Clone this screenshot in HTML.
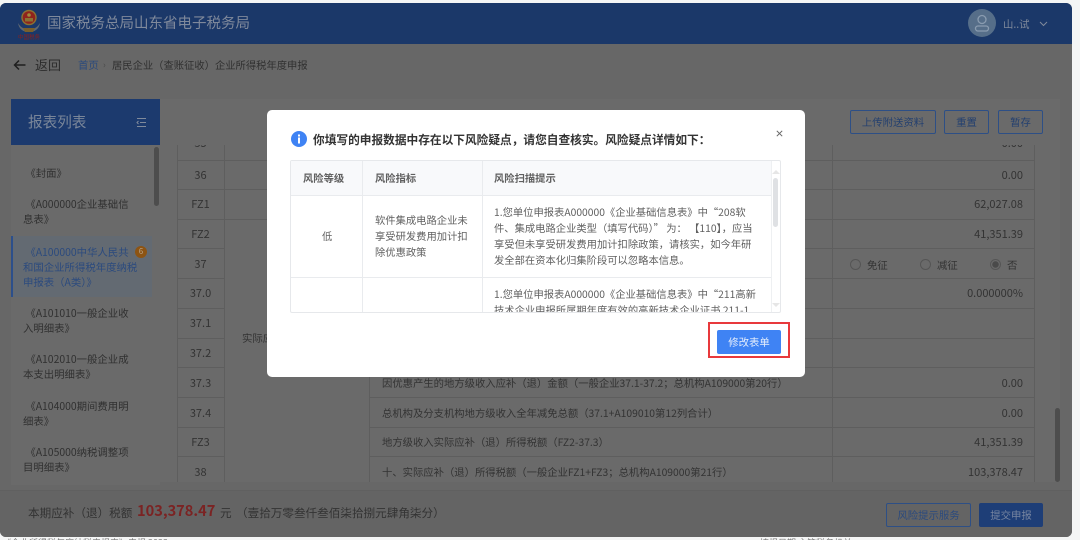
<!DOCTYPE html>
<html lang="zh"><head><meta charset="utf-8"><style>
html,body{margin:0;padding:0;width:1080px;height:540px;overflow:hidden;background:#f4f5f5}
*{box-sizing:border-box}
body{font-family:"Noto Sans CJK SC","Liberation Sans",sans-serif;color:#353535;font-size:10px;position:relative}
.a{position:absolute;white-space:nowrap}
#win{position:absolute;left:0;top:3px;width:1072px;height:534px;background:#676767;border-radius:6px;overflow:hidden;filter:blur(.35px)}
.rn{position:absolute;left:177px;width:47px;text-align:center;font-size:11px;color:#333}
.rv{position:absolute;left:832px;width:191px;text-align:right;font-size:11px;color:#333}
.rt{position:absolute;left:382px;font-size:10.34px;white-space:nowrap;color:#333}
.s{position:absolute;left:23px;width:125px;font-size:10.4px;line-height:14.7px;color:#303030;white-space:nowrap}
.btn{position:absolute;border:1px solid #2d4f86;border-radius:2px;color:#24406f;font-size:10.4px;text-align:center;height:24px;line-height:22px;top:107px}
.r{position:absolute;width:11px;height:11px;border:1px solid #555;border-radius:50%;top:256px}
.l{position:absolute;background:#5e5e5e}
#modal{position:absolute;left:267px;top:110px;width:538px;height:267px;background:#fff;border-radius:5px;filter:blur(.3px)}
.m{position:absolute;white-space:nowrap;font-size:10.3px;color:#606060;line-height:16px}
.th{font-weight:700;color:#606060}
.frag{position:absolute;top:538px;height:2px;overflow:hidden;font-size:9px;color:#777;line-height:12px;white-space:nowrap}
.frag span{display:block;margin-top:-1px}
</style></head><body>
<div class="frag" style="left:2px"><span>《企业所得税年度纳税申报表》申报 2023</span></div>
<div class="frag" style="left:760px"><span>填报日期 主管税务机关</span></div>
<div id="win">
 <div style="position:absolute;left:0;top:0;width:1072px;height:41px;background:#1b3869"></div>
 <svg style="position:absolute;left:16px;top:5px" width="26" height="35" viewBox="0 0 26 35">
  <path d="M2 15c1 6 5 9 11 9s10-3 11-9c-2 3-3 4-5 5H7c-2-1-3-2-5-5z" fill="#5f6872"/>
  <circle cx="13" cy="9.500" r="7" fill="#8f231c"/><circle cx="13" cy="9.500" r="7" fill="none" stroke="#8a7233" stroke-width="1.400"/>
  <rect x="9" y="10" width="8" height="3.500" fill="#8a7233"/><circle cx="13" cy="7" r="1.800" fill="#a08a3a"/>
  <path d="M7 20h12l-2 4H9z" fill="#7a5f2b"/>
  <text x="2" y="31" font-size="5.500" fill="#8f1f1a" font-family="Noto Sans CJK SC,sans-serif">中国税务</text>
 </svg>
 <div class="a" style="left:47px;top:10px;font-size:14.5px;line-height:20px;color:#7f899b">国家税务总局山东省电子税务局</div>
 <div style="position:absolute;left:968px;top:6px;width:28px;height:28px;border-radius:50%;background:#566e89"></div>
 <svg style="position:absolute;left:968px;top:6px" width="28" height="28" viewBox="0 0 28 28" fill="none" stroke="#8a9cb0" stroke-width="1.300"><circle cx="14" cy="10.500" r="4"/><rect x="7.500" y="17" width="13" height="5" rx="2.500"/></svg>
 <div class="a" style="left:1003px;top:14px;font-size:10.400px;line-height:14px;color:#808a9b">山..试</div>
 <svg style="position:absolute;left:1039px;top:18px" width="9" height="6" viewBox="0 0 9 6" fill="none" stroke="#808a9b" stroke-width="1"><path d="M1 1l3.500 3.500L8 1"/></svg>

 <svg style="position:absolute;left:13px;top:56px" width="13" height="12" viewBox="0 0 13 12" fill="none" stroke="#1f1f1f" stroke-width="1.500"><path d="M12.500 6H1.500M6 1.500L1.500 6 6 10.500"/></svg>
 <div class="a" style="left:35px;top:53px;font-size:13px;line-height:18px;color:#2c2c2c">返回</div>
 <div class="a" style="left:78px;top:55px;font-size:10.400px;line-height:14px;color:#2b4a7c">首页</div>
 <div class="a" style="left:103px;top:55px;font-size:9px;line-height:14px;color:#4a4a4a">›</div>
 <div class="a" style="left:112px;top:55px;font-size:10.300px;line-height:14px;color:#303030">居民企业（查账征收）企业所得税年度申报</div>

 <div style="position:absolute;left:160px;top:96px;width:900px;height:383px;background:#6a6a6a"></div>
 <div style="position:absolute;left:11px;top:142px;width:149px;height:340px;background:#6a6a6a"></div>
 <div style="position:absolute;left:11px;top:96px;width:149px;height:46px;background:#1c3a6e"></div>
 <div class="a" style="left:28px;top:108px;font-size:14.600px;line-height:22px;color:#7a8699">报表列表</div>
 <svg style="position:absolute;left:136px;top:114px" width="11" height="11" viewBox="0 0 11 11" fill="none" stroke="#808a9b" stroke-width="1"><path d="M1 1.500h9M4 5.500h6M1 9.500h9M2.500 4L1 5.500 2.500 7"/></svg>
 <div style="position:absolute;left:154px;top:144px;width:5px;height:59px;border-radius:3px;background:#4d4d4d"></div>

 <div class="s" style="top:163px">&nbsp;《封面》</div>
 <div class="s" style="top:194px">&nbsp;《A000000企业基础信<br>息表》</div>
 <div style="position:absolute;left:11px;top:233px;width:141px;height:61px;background:#636a72;border-left:2px solid #2c4f8b"></div>
 <div class="s" style="top:241px;color:#2b4a7e;line-height:15px">&nbsp;《A100000中华人民共<br>和国企业所得税年度纳税<br>申报表（A类）》</div>
 <div style="position:absolute;left:135px;top:243px;width:12px;height:12px;border-radius:50%;background:#8d5413;color:#b8a58c;font-size:8px;line-height:12px;text-align:center">6</div>
 <div class="s" style="top:303px">&nbsp;《A101010一般企业收<br>入明细表》</div>
 <div class="s" style="top:349px">&nbsp;《A102010一般企业成<br>本支出明细表》</div>
 <div class="s" style="top:396px">&nbsp;《A104000期间费用明<br>细表》</div>
 <div class="s" style="top:442px">&nbsp;《A105000纳税调整项<br>目明细表》</div>

 <div class="btn" style="left:850px;width:86px">上传附送资料</div>
 <div class="btn" style="left:944px;width:45px">重置</div>
 <div class="btn" style="left:998px;width:45px">暂存</div>

 <div style="position:absolute;left:177px;top:142px;width:858px;height:337px;border-left:1px solid #5e5e5e;border-right:1px solid #5e5e5e"></div>
 <div class="l" style="left:224px;top:142px;width:1px;height:337px"></div>
 <div class="l" style="left:369px;top:142px;width:1px;height:337px"></div>
 <div class="l" style="left:832px;top:142px;width:1px;height:337px"></div>
 <div class="l" style="left:177px;top:157px;width:858px;height:1px"></div>
 <div class="l" style="left:177px;top:186px;width:858px;height:1px"></div>
 <div class="l" style="left:177px;top:216px;width:858px;height:1px"></div>
 <div class="l" style="left:177px;top:245px;width:47px;height:1px"></div>
 <div class="l" style="left:369px;top:245px;width:666px;height:1px"></div>
 <div class="l" style="left:177px;top:275px;width:47px;height:1px"></div>
 <div class="l" style="left:369px;top:275px;width:666px;height:1px"></div>
 <div class="l" style="left:177px;top:305px;width:47px;height:1px"></div>
 <div class="l" style="left:369px;top:305px;width:666px;height:1px"></div>
 <div class="l" style="left:177px;top:335px;width:47px;height:1px"></div>
 <div class="l" style="left:369px;top:335px;width:666px;height:1px"></div>
 <div class="l" style="left:177px;top:364px;width:47px;height:1px"></div>
 <div class="l" style="left:369px;top:364px;width:666px;height:1px"></div>
 <div class="l" style="left:177px;top:394px;width:47px;height:1px"></div>
 <div class="l" style="left:369px;top:394px;width:666px;height:1px"></div>
 <div class="l" style="left:177px;top:424px;width:47px;height:1px"></div>
 <div class="l" style="left:369px;top:424px;width:666px;height:1px"></div>
 <div class="l" style="left:177px;top:453px;width:47px;height:1px"></div>
 <div class="l" style="left:369px;top:453px;width:666px;height:1px"></div>

 <div style="position:absolute;left:177px;top:142px;width:858px;height:337px;overflow:hidden">
  <div class="rn" style="left:0;top:-10px">35</div>
  <div class="rv" style="left:655px;top:-10px">0.00</div>
 </div>
 <div class="rn" style="top:164px">36</div><div class="rv" style="top:164px">0.00</div>
 <div class="rn" style="top:193px">FZ1</div><div class="rv" style="top:193px">62,027.08</div>
 <div class="rn" style="top:223px">FZ2</div><div class="rv" style="top:223px">41,351.39</div>
 <div class="rn" style="top:253px">37</div>
 <div class="r" style="left:850px"></div><div class="a" style="left:867px;top:254px;font-size:10.400px;color:#333">免征</div>
 <div class="r" style="left:920px"></div><div class="a" style="left:937px;top:254px;font-size:10.400px;color:#333">减征</div>
 <div class="r" style="left:990px;background:radial-gradient(circle,#4a4a4a 0 3px,#6a6a6a 3.500px)"></div><div class="a" style="left:1007px;top:254px;font-size:10.400px;color:#333">否</div>
 <div class="rn" style="top:282px">37.0</div><div class="rv" style="top:282px">0.000000%</div>
 <div class="rn" style="top:312px">37.1</div>
 <div class="rn" style="top:342px">37.2</div>
 <div class="a" style="left:242px;top:327px;font-size:10.400px;color:#333">实际应</div>
 <div class="rn" style="top:372px">37.3</div><div class="rv" style="top:372px">0.00</div>
 <div class="rt" style="top:372px">因优惠产生的地方级收入应补（退）金额（一般企业37.1-37.2；总机构A109000第20行）</div>
 <div class="rn" style="top:402px">37.4</div><div class="rv" style="top:402px">0.00</div>
 <div class="rt" style="top:402px">总机构及分支机构地方级收入全年减免总额（37.1+A109010第12列合计）</div>
 <div class="rn" style="top:431px">FZ3</div><div class="rv" style="top:431px">41,351.39</div>
 <div class="rt" style="top:431px">地方级收入实际应补（退）所得税额（FZ2-37.3）</div>
 <div class="rn" style="top:461px">38</div><div class="rv" style="top:461px">103,378.47</div>
 <div class="rt" style="top:461px">十、实际应补（退）所得税额（一般企业FZ1+FZ3；总机构A109000第21行）</div>
 <div style="position:absolute;left:1055px;top:405px;width:5px;height:74px;border-radius:3px;background:#4d4d4d"></div>

 <div style="position:absolute;left:0;top:487px;width:1072px;height:47px;background:#646464;border-top:1px solid #606060"></div>
 <div class="a" style="left:28px;top:502px;font-size:11.600px;line-height:16px;color:#333">本期应补（退）税额</div>
 <div class="a" style="left:137px;top:498px;font-size:14.600px;line-height:20px;font-weight:700;color:#7b2323">103,378.47</div>
 <div class="a" style="left:220px;top:502px;font-size:11.600px;line-height:16px;color:#333">元</div>
 <div class="a" style="left:236px;top:502px;font-size:11.600px;line-height:16px;color:#333">（壹拾万零叁仟叁佰柒拾捌元肆角柒分）</div>
 <div style="position:absolute;left:886px;top:500px;width:85px;height:24px;border:1px solid #2d4f86;border-radius:2px;color:#2b4a7e;font-size:10.400px;line-height:22px;text-align:center">风险提示服务</div>
 <div style="position:absolute;left:979px;top:500px;width:64px;height:24px;background:#1e3e77;border-radius:2px;color:#7785a0;font-size:10.400px;line-height:24px;text-align:center">提交申报</div>
</div>

<div id="modal">
 <svg style="position:absolute;left:24px;top:21px" width="16" height="16" viewBox="0 0 16 16"><circle cx="8" cy="8" r="8" fill="#3f83f4"/><rect x="7" y="6.500" width="2" height="6" fill="#fff"/><rect x="7" y="3.500" width="2" height="2" fill="#fff"/></svg>
 <div class="a" style="left:46px;top:21px;font-size:11.700px;line-height:17px;font-weight:700;color:#333">你填写的申报数据中存在以下风险疑点，请您自查核实。风险疑点详情如下：</div>
 <svg style="position:absolute;left:509px;top:20px" width="7" height="7" viewBox="0 0 7 7" fill="none" stroke="#666" stroke-width="1"><path d="M.8.8l5.400 5.400M6.200.8L.8 6.200"/></svg>

 <div style="position:absolute;left:23px;top:50px;width:491px;height:153px;border:1px solid #e6e8eb;border-radius:2px;overflow:hidden;background:#fff">
  <div style="position:absolute;left:0;top:0;width:480px;height:34px;background:#f8f9fb"></div>
  <div style="position:absolute;left:0;top:34px;width:480px;height:1px;background:#e9ebee"></div>
  <div style="position:absolute;left:0;top:116px;width:480px;height:1px;background:#e9ebee"></div>
  <div style="position:absolute;left:71px;top:0;width:1px;height:153px;background:#e9ebee"></div>
  <div style="position:absolute;left:191px;top:0;width:1px;height:153px;background:#e9ebee"></div>
  <div style="position:absolute;left:480px;top:0;width:1px;height:153px;background:#eef0f2"></div>
  <div class="m th" style="left:12px;top:9px">风险等级</div>
  <div class="m th" style="left:84px;top:9px">风险指标</div>
  <div class="m th" style="left:203px;top:9px">风险扫描提示</div>
  <div class="m" style="left:31px;top:67px">低</div>
  <div class="m" style="left:84px;top:51px">软件集成电路企业未<br>享受研发费用加计扣<br>除优惠政策</div>
  <div class="m" style="left:203px;top:43px">1.您单位申报表A000000《企业基础信息表》中“208软</div>
  <div class="m" style="left:203px;top:59px">件、集成电路企业类型（填写代码）”&nbsp;为：&nbsp;【110】，应当</div>
  <div class="m" style="left:203px;top:75px">享受但未享受研发费用加计扣除政策，请核实，如今年研</div>
  <div class="m" style="left:203px;top:91px">发全部在资本化归集阶段可以忽略本信息。</div>
  <div class="m" style="left:203px;top:125px">1.您单位申报表A000000《企业基础信息表》中“211高新</div>
  <div class="m" style="left:203px;top:141px">技术企业申报所属期年度有效的高新技术企业证书 211-1</div>
  <div style="position:absolute;left:481px;top:7px;width:8px;height:6px;border-left:4px solid transparent;border-right:4px solid transparent;border-bottom:4px solid #e6e6e6"></div>
  <div style="position:absolute;left:482px;top:17px;width:5px;height:49px;border-radius:3px;background:#dfe1e4"></div>
  <div style="position:absolute;left:481px;top:142px;width:8px;height:6px;border-left:4px solid transparent;border-right:4px solid transparent;border-top:4px solid #e6e6e6"></div>
 </div>

 <div style="position:absolute;left:441px;top:212px;width:82px;height:36px;border:2px solid #e8393c"></div>
 <div style="position:absolute;left:450px;top:220px;width:64px;height:24px;background:#3f83f4;border-radius:2px;color:#e6eefc;font-size:10.400px;line-height:24px;text-align:center">修改表单</div>
</div>
</body></html>
